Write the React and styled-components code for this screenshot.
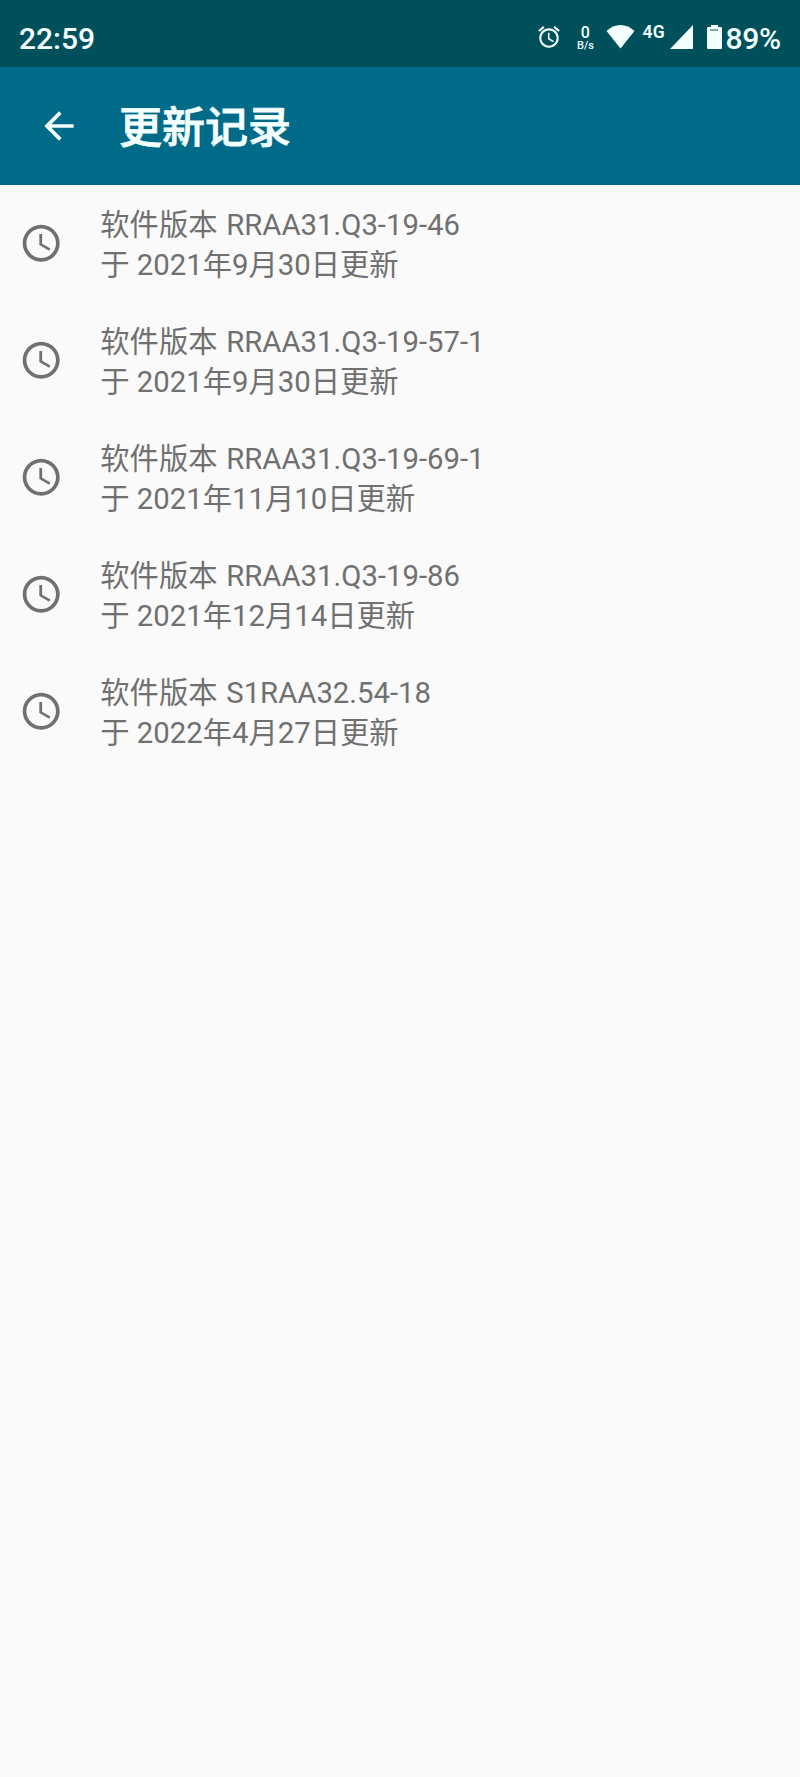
import styled, { createGlobalStyle } from "styled-components";

const GlobalStyle = createGlobalStyle`
    * {
        box-sizing: border-box;
    }
    body {
        margin: 0;
        background-color: #fafafa;
        font-family: Roboto, "Noto Sans CJK SC", sans-serif;
    }
    p, h1, ul {
        margin: 0;
        padding: 0;
    }
`;

const Pantalla = styled.div`
    width: 100%;
    min-height: 1777px;
    background-color: #fafafa;
`;

const BarraEstado = styled.div`
    height: 67px;
    display: flex;
    align-items: center;
    justify-content: space-between;
    padding: 10px 19px 0 19px;
    background-color: #00505c;
    color: #f4ffff;
`;

const TxtEstado = styled.span`
    margin-left: ${props => props.$izq || 0}px;
    font-size: 30px;
    font-weight: 500;
    line-height: 36px;
    letter-spacing: ${props => props.$espacio || '0'};
`;

const GrupoIconos = styled.div`
    height: 36px;
    display: flex;
    align-items: center;
`;

const IconoEstado = styled.svg`
    display: block;
    flex: none;
    margin-left: ${props => props.$izq}px;
    margin-bottom: ${props => props.$abajo || 0}px;
    fill: currentColor;
`;

const Velocidad = styled.div`
    width: 20px;
    margin-left: 13px;
    display: flex;
    flex-direction: column;
    align-items: center;
    font-weight: 500;
`;

const TxtVelocidad = styled.span`
    font-size: ${props => props.$size}px;
    line-height: ${props => props.$alto}px;
`;

const TxtRed = styled.span`
    width: 23px;
    height: 36px;
    margin-left: 7px;
    font-size: 17.5px;
    font-weight: 600;
    line-height: 22px;
    letter-spacing: 0.3px;
    white-space: nowrap;
`;

const BarraTitulo = styled.header`
    height: 118px;
    display: flex;
    align-items: center;
    padding-left: 37px;
    background-color: #006b88;
    color: #f4ffff;
`;

const BtnVolver = styled.button`
    width: 44px;
    height: 44px;
    padding: 0;
    border: none;
    background: none;
    color: inherit;
`;

const Titulo = styled.h1`
    margin-left: 38px;
    padding-top: 3px;
    font-size: 43px;
    font-weight: 500;
    line-height: 60px;
    -webkit-text-stroke: 0.8px currentColor;
`;

const Lista = styled.ul`
    list-style: none;
`;

const Fila = styled.li`
    height: 117px;
    display: flex;
    align-items: center;
    padding-left: 18.5px;
    color: #707070;
`;

const TextoFila = styled.div`
    margin-left: 37.4px;
    padding-top: 2px;
    font-size: 29.3px;
    line-height: 40px;
    white-space: nowrap;
`;

const TxtVersion = styled.p`
    word-spacing: 1.5px;
`;

const IconoReloj = () => (
    <svg width="44.4" height="44.4" viewBox="0 0 24 24" fill="currentColor">
        <path d="M11.99 2C6.47 2 2 6.48 2 12s4.47 10 9.99 10C17.52 22 22 17.52 22 12S17.52 2 11.99 2zM12 20c-4.42 0-8-3.58-8-8s3.58-8 8-8 8 3.58 8 8-3.58 8-8 8z" />
        <path d="M12.5 7H11v6l5.25 3.15.75-1.23-4.5-2.67z" />
    </svg>
);

const IconoFlecha = () => (
    <svg width="44" height="44" viewBox="0 0 24 24" fill="currentColor">
        <path d="M20 11H7.83l5.59-5.59L12 4l-8 8 8 8 1.41-1.41L7.83 13H20v-2z" />
    </svg>
);

const versiones = [
    { version: 'RRAA31.Q3-19-46', fecha: '2021年9月30日' },
    { version: 'RRAA31.Q3-19-57-1', fecha: '2021年9月30日' },
    { version: 'RRAA31.Q3-19-69-1', fecha: '2021年11月10日' },
    { version: 'RRAA31.Q3-19-86', fecha: '2021年12月14日' },
    { version: 'S1RAA32.54-18', fecha: '2022年4月27日' },
];

const Estado = () => (
    <BarraEstado>
        <TxtEstado>22:59</TxtEstado>
        <GrupoIconos>
            {/* alarma */}
            <IconoEstado $izq={0} $abajo={3} width="26" height="26" viewBox="0 0 24 24">
                <path d="M22 5.72l-4.6-3.86-1.29 1.53 4.6 3.86L22 5.72zM7.88 3.39L6.6 1.86 2 5.71l1.29 1.53 4.59-3.85zM12.5 8H11v6l4.75 2.85.75-1.23-4-2.37V8zM12 4c-4.97 0-9 4.03-9 9s4.02 9 9 9c4.97 0 9-4.03 9-9s-4.03-9-9-9zm0 16c-3.87 0-7-3.13-7-7s3.13-7 7-7 7 3.13 7 7-3.13 7-7 7z" />
            </IconoEstado>
            <Velocidad>
                <TxtVelocidad $size={16} $alto={13}>0</TxtVelocidad>
                <TxtVelocidad $size={11} $alto={13}>B/s</TxtVelocidad>
            </Velocidad>
            {/* wifi */}
            <IconoEstado $izq={11} $abajo={4} width="29" height="25" viewBox="0 0 29 25">
                <path d="M0.5 7C8.5-1 20.5-1 28.5 7L14.5 24.5z" />
            </IconoEstado>
            <TxtRed>4G</TxtRed>
            <IconoEstado $izq={5} $abajo={4} width="23" height="24" viewBox="0 0 24 24" preserveAspectRatio="none">
                <path d="M0 24H24V0z" />
            </IconoEstado>
            {/* bateria */}
            <IconoEstado $izq={14} $abajo={3} width="15" height="24" viewBox="0 0 15 24">
                <path fillRule="evenodd" d="M4 0h7v2h3q1 0 1 1V23q0 1-1 1h-13Q0 24 0 23V3Q0 2 1 2H4zM3 4.500V5.500H11V4.500z" />
            </IconoEstado>
            <TxtEstado $izq={3} $espacio="-0.2px">89%</TxtEstado>
        </GrupoIconos>
    </BarraEstado>
);

const FilaVersion = ({ version, fecha }) => (
    <Fila>
        <IconoReloj />
        <TextoFila>
            <TxtVersion>软件版本 {version}</TxtVersion>
            <p>于 {fecha}更新</p>
        </TextoFila>
    </Fila>
);

export default function App() {
    return (
        <Pantalla>
            <GlobalStyle />
            <Estado />
            <BarraTitulo>
                <BtnVolver aria-label="返回">
                    <IconoFlecha />
                </BtnVolver>
                <Titulo>更新记录</Titulo>
            </BarraTitulo>
            <Lista>
                {versiones.map((item) => (
                    <FilaVersion key={item.version} version={item.version} fecha={item.fecha} />
                ))}
            </Lista>
        </Pantalla>
    );
}
